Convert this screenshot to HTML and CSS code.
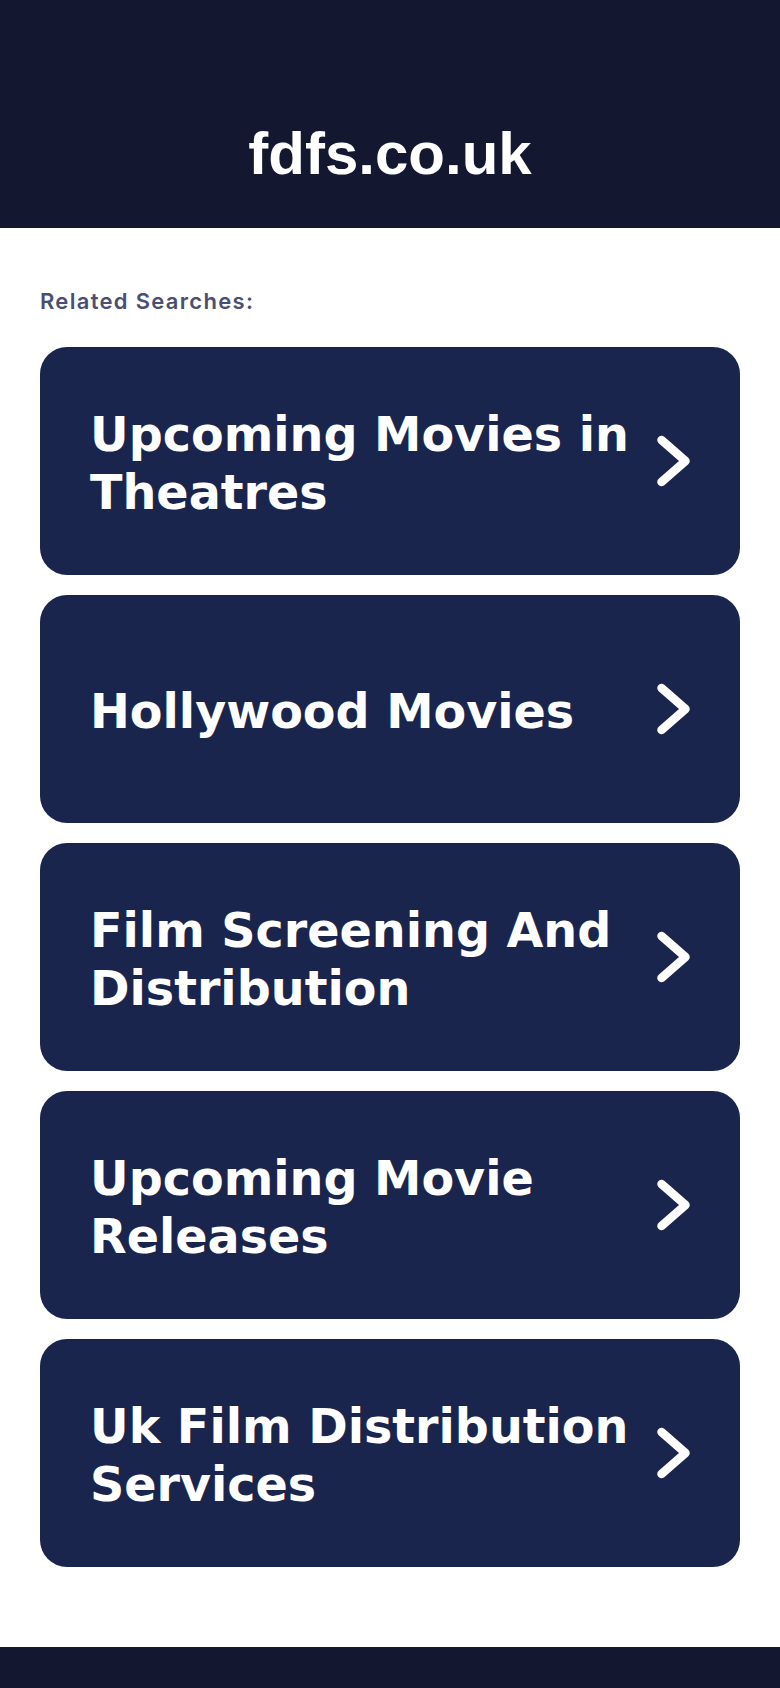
FILE: index.html
```html
<!DOCTYPE html>
<html lang="en">
<head>
<meta charset="utf-8">
<title>fdfs.co.uk</title>
<link rel="stylesheet" href="styles.css">
</head>
<body>
<header class="site-header">
  <h1 class="site-title">fdfs.co.uk</h1>
</header>
<main class="content">
  <p class="label">Related Searches:</p>
  <div class="list">
    <a class="card" href="#"><span class="card-text">Upcoming Movies in Theatres</span><svg class="chev" viewBox="0 0 34 54" width="34" height="54"><polyline points="5.5,6 29.5,27 5.5,48" /></svg></a>
    <a class="card" href="#"><span class="card-text">Hollywood Movies</span><svg class="chev" viewBox="0 0 34 54" width="34" height="54"><polyline points="5.5,6 29.5,27 5.5,48" /></svg></a>
    <a class="card" href="#"><span class="card-text">Film Screening And Distribution</span><svg class="chev" viewBox="0 0 34 54" width="34" height="54"><polyline points="5.5,6 29.5,27 5.5,48" /></svg></a>
    <a class="card" href="#"><span class="card-text">Upcoming Movie Releases</span><svg class="chev" viewBox="0 0 34 54" width="34" height="54"><polyline points="5.5,6 29.5,27 5.5,48" /></svg></a>
    <a class="card" href="#"><span class="card-text">Uk Film Distribution Services</span><svg class="chev" viewBox="0 0 34 54" width="34" height="54"><polyline points="5.5,6 29.5,27 5.5,48" /></svg></a>
  </div>
</main>
<footer class="site-footer"></footer>
</body>
</html>
```

FILE: styles.css
```css
* { box-sizing: border-box; }
html, body { margin: 0; padding: 0; background: #ffffff; }
body { font-family: "DejaVu Sans", Verdana, sans-serif; }

.site-header {
  background: #131830;
  height: 228px;
  padding-top: 119px;
}
.site-title {
  margin: 0;
  text-align: center;
  color: #ffffff;
  font-family: "Liberation Sans", Arial, sans-serif;
  font-weight: 700;
  font-size: 60px;
  line-height: 69px;
}

.content {
  padding: 60px 40px 80px;
}
.label {
  margin: 0 0 32px;
  font-family: Inter, "Open Sans", sans-serif;
  font-weight: 600;
  font-size: 22px;
  line-height: 27px;
  letter-spacing: 1.3px;
  color: #4a4f72;
}
.list {
  display: flex;
  flex-direction: column;
  gap: 20px;
}
.card {
  display: flex;
  align-items: center;
  gap: 16px;
  height: 228px;
  padding: 0 50px;
  border-radius: 27px;
  background: #1a254e;
  color: #ffffff;
  text-decoration: none;
}
.card-text {
  flex: 1;
  font-family: "DejaVu Sans", Verdana, sans-serif;
  font-weight: 700;
  font-size: 47.6px;
  line-height: 58px;
  padding-top: 6px;
}
.chev {
  flex: none;
  display: block;
}
.chev polyline {
  fill: none;
  stroke: #ffffff;
  stroke-width: 8.5;
  stroke-linecap: round;
  stroke-linejoin: round;
}

.site-footer {
  background: #131830;
  height: 41px;
}
```
